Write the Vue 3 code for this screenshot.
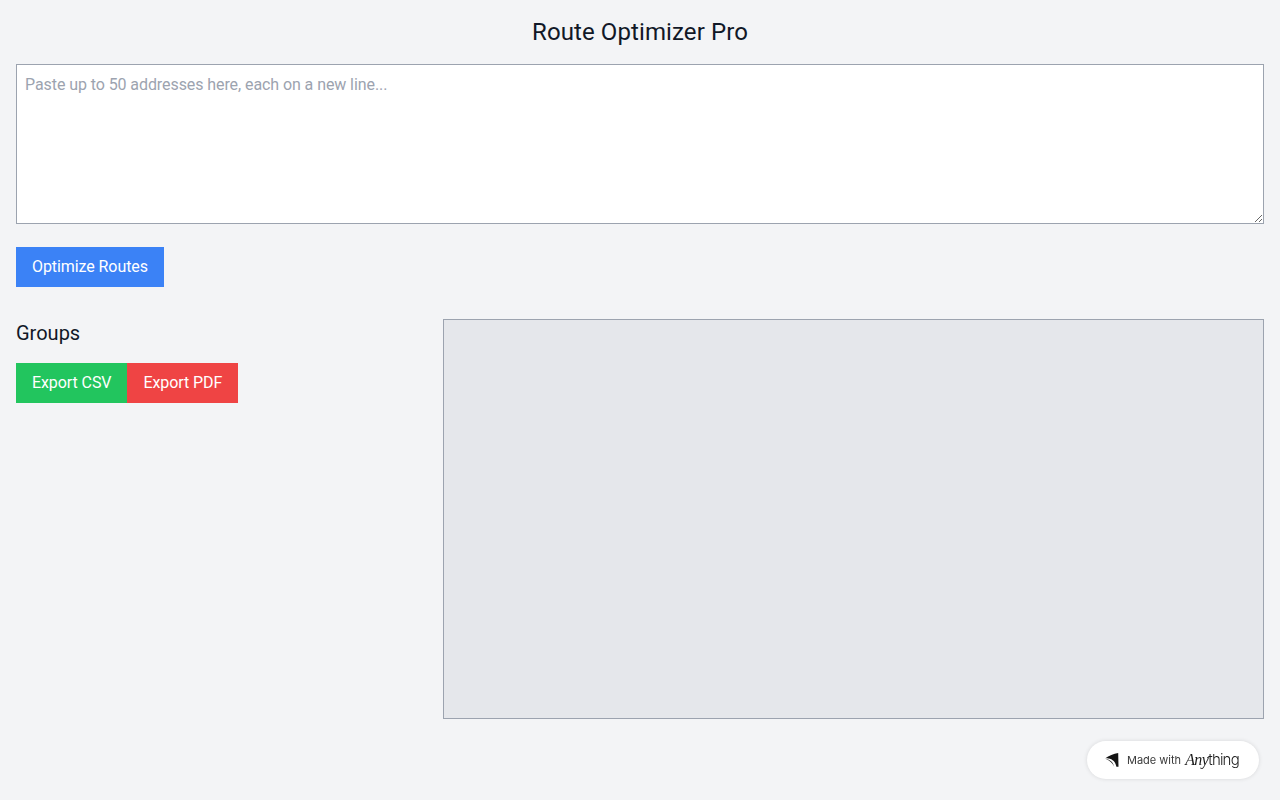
<script setup>
const title = 'Route Optimizer Pro'
</script>

<template>
  <main class="page">
    <h1 class="title">{{ title }}</h1>
    <textarea class="addresses" placeholder="Paste up to 50 addresses here, each on a new line..."></textarea>
    <button class="btn blue optimize">Optimize Routes</button>
    <section class="columns">
      <div class="groups">
        <h2 class="subtitle">Groups</h2>
        <div class="actions">
          <button class="btn green">Export CSV</button>
          <button class="btn red">Export PDF</button>
        </div>
      </div>
      <div class="map"></div>
    </section>
    <a class="made">
      <svg class="logo" width="14" height="14" viewBox="0 0 14 14">
        <path d="M0 5.4C4 2.7 8.5 0.8 13.2 0L13.5 13.8L11.4 13.8C10.8 9.2 7.6 6 3.4 5.5C2.2 5.3 1 5.3 0 5.4Z" fill="#141414"/>
        <path d="M0.8 5.9C4.8 6.4 8.2 9 9 13.4C7.6 10 4.6 7.4 0.8 5.9Z" fill="#141414"/>
      </svg>
      <span class="made-text">Made with</span>
      <span class="brand"><em>Any</em><span class="thing">thing</span></span>
    </a>
  </main>
</template>

<style>
html, body { margin: 0; background: #f3f4f6; }
</style>

<style scoped>
.page {
  box-sizing: border-box;
  min-height: 800px;
  padding: 16px;
  background: #f3f4f6;
  font-family: Roboto, "Liberation Sans", sans-serif;
  color: #111827;
}
.title {
  margin: 0 0 16px;
  font-size: 24px;
  line-height: 32px;
  font-weight: 400;
  letter-spacing: 0.1px;
  text-align: center;
}
.addresses {
  display: block;
  box-sizing: border-box;
  width: 100%;
  height: 160px;
  margin: 0 0 23px;
  padding: 8px;
  border: 1px solid #9ca3af;
  border-radius: 0;
  background: #fff;
  font: 16px/24px Roboto, "Liberation Sans", sans-serif;
  letter-spacing: -0.08px;
  color: #111827;
  outline: none;
}
.addresses::placeholder { color: #9ca3af; opacity: 1; }
.btn {
  display: block;
  height: 40px;
  padding: 8px 16px;
  border: 0;
  border-radius: 0;
  font: 16px/24px Roboto, "Liberation Sans", sans-serif;
  letter-spacing: -0.08px;
  color: #fff;
}
.blue { background: #3b82f6; }
.green { background: #22c55e; }
.red { background: #ef4444; }
.optimize { margin-bottom: 32px; }
.columns {
  display: grid;
  grid-template-columns: 1fr 821px;
  column-gap: 16px;
}
.subtitle {
  margin: 0 0 16px;
  font-size: 20px;
  line-height: 28px;
  font-weight: 400;
}
.actions { display: flex; }
.map {
  box-sizing: border-box;
  height: 400px;
  border: 1px solid #9ca3af;
  background: #e5e7eb;
}
.made {
  position: fixed;
  right: 21px;
  bottom: 21px;
  box-sizing: border-box;
  width: 172px;
  height: 38px;
  display: flex;
  align-items: center;
  padding-left: 18px;
  border-radius: 19px;
  background: #fff;
  box-shadow: 0 0 4px rgba(0, 0, 0, 0.12);
}
.logo { flex: none; }
.made-text {
  margin-left: 8px;
  font: 11px/14px Inter, "Liberation Sans", sans-serif;
  color: #3a3a3a;
}
.brand {
  margin-left: 4px;
  display: flex;
  align-items: baseline;
  color: #1a1a1a;
}
.brand em {
  font: italic 16px/16px "Liberation Serif", serif;
  letter-spacing: -0.6px;
}
.thing {
  font: 300 15px/16px Inter, "Liberation Sans", sans-serif;
  letter-spacing: -0.8px;
}
</style>
